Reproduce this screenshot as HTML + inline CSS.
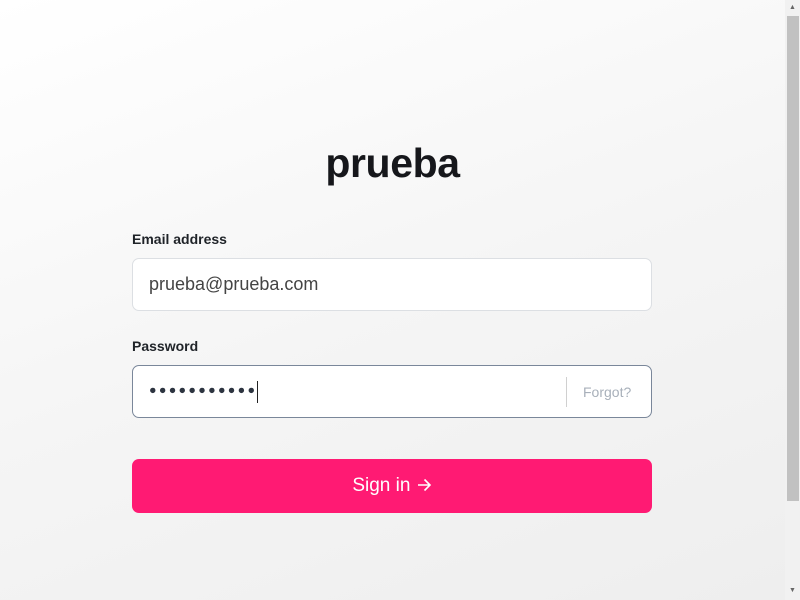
<!DOCTYPE html>
<html><head><style>
html,body{margin:0;padding:0}
body{width:800px;height:600px;overflow:hidden;position:relative;font-family:"Liberation Sans",sans-serif;background:linear-gradient(160deg,#ffffff 0%,#f5f5f5 50%,#eeeeee 100%)}
.t{position:absolute;left:0;width:785px;top:140px;text-align:center;font-size:41px;font-weight:bold;color:#16171b;letter-spacing:-0.4px}
.l{position:absolute;left:132px;font-size:14px;font-weight:bold;color:#1f2328}
.in{position:absolute;left:132px;width:518px;height:51px;background:#fff;border:1px solid #dcdfe3;border-radius:7px;box-sizing:content-box}
.v{position:absolute;left:16px;top:15px;font-size:18px;color:#444}
.btn{position:absolute;left:132px;top:459px;width:520px;height:54px;background:#ff1a73;border-radius:7px;color:#fff;font-size:19px;text-align:center;line-height:53px}
.sb{position:absolute;right:0;top:0;width:15px;height:600px;background:#f1f1f1}
.th{position:absolute;left:2px;top:16px;width:12px;height:485px;background:#c1c1c1}
</style></head><body>
<div class="t">prueba</div>
<div class="l" style="top:231px">Email address</div>
<div class="in" style="top:258px"><div class="v">prueba@prueba.com</div></div>
<div class="l" style="top:338px">Password</div>
<div class="in" style="top:365px;border-color:#7a879a">
<div class="v" style="top:17px;letter-spacing:2.3px;color:#2d3440;font-size:12.5px">●●●●●●●●●●●</div>
<div style="position:absolute;left:124px;top:15px;width:1px;height:22px;background:#222"></div>
<div style="position:absolute;left:433px;top:11px;width:1px;height:30px;background:#d0d0d0"></div>
<div style="position:absolute;left:450px;top:18px;font-size:14px;color:#a8b0ba">Forgot?</div>
</div>
<div class="btn">Sign in <svg width="16" height="14" viewBox="0 0 16 14" style="vertical-align:-1px"><path d="M2 7H14M8.5 1.5L14 7L8.5 12.5" fill="none" stroke="#fff" stroke-width="1.6"/></svg></div>
<div class="sb"><div class="th"></div>
<div style="position:absolute;left:4px;top:4px;font-size:7px;color:#666">▲</div>
<div style="position:absolute;left:4px;top:587px;font-size:7px;color:#666">▼</div></div>
</body></html>
